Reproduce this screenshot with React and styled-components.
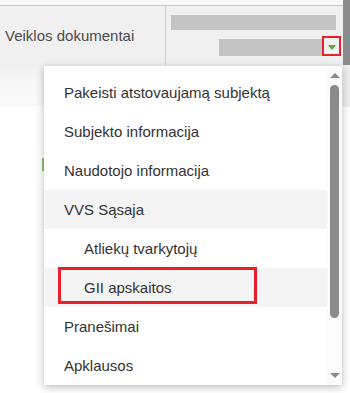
import React from 'react'
import styled, { createGlobalStyle } from 'styled-components'

const GlobalStyle = createGlobalStyle`
  html, body {
    margin: 0;
    padding: 0;
    background: #ffffff;
    font-family: "Liberation Sans", Arial, sans-serif;
  }
`

const Page = styled.div`
  position: relative;
  width: 350px;
  height: 393px;
  overflow: hidden;
  display: flex;
  flex-direction: row;
`

const Main = styled.div`
  flex: 1;
  display: flex;
  flex-direction: column;
`

const TopStrip = styled.div`
  height: 5px;
  background: #f8f8f8;
  border-bottom: 1px solid #c6c6c6;
`

const Header = styled.div`
  height: 59px;
  display: flex;
  flex-direction: row;
  background: #f0f0f0;
  box-shadow: 0 2px 3px rgba(0, 0, 0, 0.06);
`

const HeaderTitle = styled.div`
  width: 160px;
  padding-left: 5px;
  display: flex;
  align-items: center;
  border-right: 1px solid #d2d2d2;
  font-size: 15px;
  color: #4a4a4a;
`

const HeaderSide = styled.div`
  flex: 1;
  display: flex;
  flex-direction: column;
  align-items: flex-end;
  padding-top: 9px;
`

const Redacted = styled.div`
  background: #c4c4c4;
  width: ${p => p.$w}px;
  height: ${p => p.$h}px;
`

const SelectRow = styled.div`
  display: flex;
  flex-direction: row;
  align-items: center;
  margin-top: 8px;
  margin-right: 2px;
`

const ArrowBox = styled.div`
  width: 15px;
  height: 16px;
  border: 2px solid #e8202a;
  display: flex;
  align-items: center;
  justify-content: center;
  margin-top: -2px;
`

const GreenArrow = styled.div`
  width: 0;
  height: 0;
  border-left: 4px solid transparent;
  border-right: 4px solid transparent;
  border-top: 5px solid #5aa83c;
  margin-top: 2px;
`

const SubBand = styled.div`
  height: 41px;
  background: linear-gradient(#f0f0f0, #f7f7f7 40%, #f9f9f9);
`

const Body = styled.div`
  flex: 1;
  position: relative;
  padding-left: 42px;
  padding-top: 52px;
`

const GreenMark = styled.div`
  width: 2px;
  height: 13px;
  background: #8cc87a;
`

const PageScroll = styled.div`
  width: 7px;
  display: flex;
  flex-direction: column;
`

const PageThumb = styled.div`
  height: 65px;
  background: #8b8b8b;
`

const PageTrack = styled.div`
  height: 42px;
  background: #ededed;
`

const Menu = styled.div`
  position: absolute;
  left: 44px;
  top: 66px;
  width: 298px;
  height: 319px;
  background: #ffffff;
  box-shadow: 0 2px 8px rgba(0, 0, 0, 0.28);
  display: flex;
  flex-direction: row;
  overflow: hidden;
`

const List = styled.div`
  flex: 1;
  padding-top: 7px;
  display: flex;
  flex-direction: column;
`

const Item = styled.div`
  position: relative;
  height: 39px;
  flex-shrink: 0;
  display: flex;
  align-items: center;
  padding-left: ${p => (p.$sub ? 40 : 20)}px;
  background: ${p => (p.$shade ? '#f4f4f4' : '#ffffff')};
  font-size: 15px;
  color: #333333;
`

const Marked = styled.div`
  position: absolute;
  left: 14px;
  top: -1px;
  width: 193px;
  height: 31px;
  border: 3px solid #e8202a;
`

const Scrollbar = styled.div`
  width: 15px;
  background: #fbfbfb;
  display: flex;
  flex-direction: column;
  align-items: center;
  padding-top: 7px;
`

const ArrowUp = styled.div`
  width: 0;
  height: 0;
  border-left: 5px solid transparent;
  border-right: 5px solid transparent;
  border-bottom: 5px solid #8b8b8b;
`

const ArrowDown = styled.div`
  width: 0;
  height: 0;
  border-left: 5px solid transparent;
  border-right: 5px solid transparent;
  border-top: 5px solid #8b8b8b;
  margin-top: 55px;
`

const Thumb = styled.div`
  width: 9px;
  height: 233px;
  margin-top: 7px;
  border-radius: 5px;
  background: #8b8b8b;
`

const items = [
  { label: 'Pakeisti atstovaujamą subjektą' },
  { label: 'Subjekto informacija' },
  { label: 'Naudotojo informacija' },
  { label: 'VVS Sąsaja', shade: true },
  { label: 'Atliekų tvarkytojų', sub: true },
  { label: 'GII apskaitos', sub: true, shade: true, marked: true },
  { label: 'Pranešimai' },
  { label: 'Apklausos' },
]

export default function App() {
  return (
    <>
      <GlobalStyle />
      <Page>
        <Main>
          <TopStrip />
          <Header>
            <HeaderTitle>Veiklos dokumentai</HeaderTitle>
            <HeaderSide>
              <Redacted $w={165} $h={15} style={{ marginRight: 7 }} />
              <SelectRow>
                <Redacted $w={103} $h={17} />
                <ArrowBox>
                  <GreenArrow />
                </ArrowBox>
              </SelectRow>
            </HeaderSide>
          </Header>
          <SubBand />
          <Body>
            <GreenMark />
          </Body>
        </Main>
        <PageScroll>
          <PageThumb />
          <PageTrack />
        </PageScroll>

        <Menu>
          <List>
            {items.map(it => (
              <Item key={it.label} $sub={it.sub} $shade={it.shade}>
                {it.label}
                {it.marked && <Marked />}
              </Item>
            ))}
          </List>
          <Scrollbar>
            <ArrowUp />
            <Thumb />
            <ArrowDown />
          </Scrollbar>
        </Menu>
      </Page>
    </>
  )
}
